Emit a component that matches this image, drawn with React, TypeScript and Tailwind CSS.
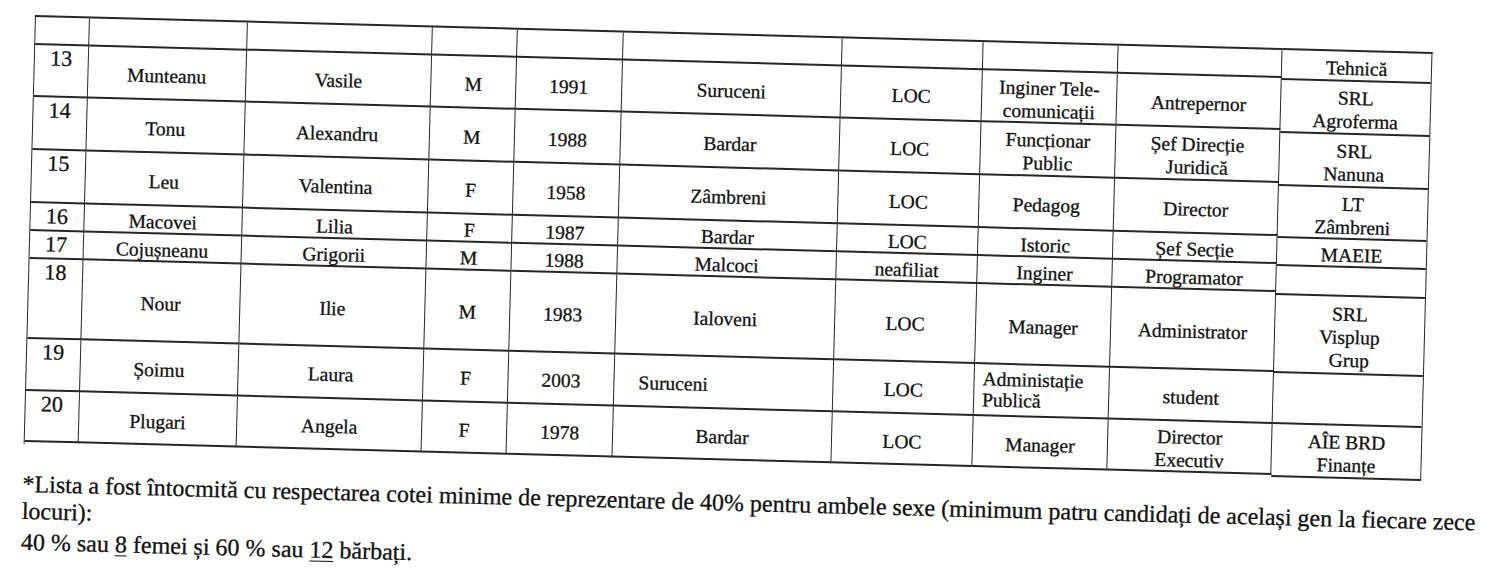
import React from "react";

type V = string | string[];

const mainRows: V[][] = [
  ["", "", "", "", "", "", "", "", ""],
  ["13", "Munteanu", "Vasile", "M", "1991", "Suruceni", "LOC", ["Inginer Tele-", "comunicații"], "Antrepernor"],
  ["14", "Tonu", "Alexandru", "M", "1988", "Bardar", "LOC", ["Funcționar", "Public"], ["Șef Direcție", "Juridică"]],
  ["15", "Leu", "Valentina", "F", "1958", "Zâmbreni", "LOC", "Pedagog", "Director"],
  ["16", "Macovei", "Lilia", "F", "1987", "Bardar", "LOC", "Istoric", "Șef Secție"],
  ["17", "Cojușneanu", "Grigorii", "M", "1988", "Malcoci", "neafiliat", "Inginer", "Programator"],
  ["18", "Nour", "Ilie", "M", "1983", "Ialoveni", "LOC", "Manager", "Administrator"],
  ["19", "Șoimu", "Laura", "F", "2003", "Suruceni", "LOC", ["Administație", "Publică"], "student"],
  ["20", "Plugari", "Angela", "F", "1978", "Bardar", "LOC", "Manager", ["Director", "Executiv"]],
];

const company: V[] = [
  "Tehnică",
  ["SRL", "Agroferma"],
  ["SRL", "Nanuna"],
  ["LT", "Zâmbreni"],
  "MAEIE",
  "",
  ["SRL", "Visplup", "Grup"],
  "",
  ["AÎE BRD", "Finanțe"],
];

const companyH = [
  "h-[30px]",
  "h-[53px]",
  "h-[53px]",
  "h-[52px]",
  "h-[28px]",
  "h-[29px]",
  "h-[78px]",
  "h-[51px]",
  "h-[53px]",
];

const border = "border-r-[1.5px] border-b-2 border-[#262626]";
const baseCell =
  "flex items-center justify-center text-center pt-[5px] text-[19.5px] leading-[23px] " + border;
const idxCell =
  "flex items-start justify-center pt-[1px] text-[22px] leading-[24px] " + border;
const leftLocCell =
  "flex items-center justify-start pl-[24px] pt-[5px] text-[19.5px] leading-[23px] " + border;
const leftProfCell =
  "flex items-center justify-start text-left pl-[8px] text-[19.5px] leading-[21px] " + border;

function Lines({ v }: { v: V }) {
  const arr = Array.isArray(v) ? v : [v];
  return (
    <div className="flex flex-col">
      {arr.map((l, i) => (
        <div key={i} className="whitespace-nowrap">
          {l}
        </div>
      ))}
    </div>
  );
}

export default function App() {
  return (
    <div className="w-[1500px] h-[576px] overflow-hidden bg-white text-[#111111] [-webkit-text-stroke:0.3px_#111111] font-['Liberation_Serif','Times_New_Roman',serif]">
      <div className="pt-[15px] pl-[35px]">
        <div className="origin-top-left rotate-[1.52deg] w-[1400px]">
          <div className="flex">
            <div className="grid grid-cols-[53.5px_158.5px_185px_85px_106px_219px_141px_135px_164px] grid-rows-[28px_52px_53px_53px_28px_28px_80px_52px_51px] border-t-2 border-l-[1.5px] border-[#262626]">
              {mainRows.map((row, r) =>
                row.map((v, c) => {
                  let cls = baseCell;
                  if (c === 0) cls = idxCell;
                  if (r === 7 && c === 5) cls = leftLocCell;
                  if (r === 7 && c === 7) cls = leftProfCell;
                  return (
                    <div key={r + "-" + c} className={cls}>
                      <Lines v={v} />
                    </div>
                  );
                })
              )}
            </div>
            <div className="flex flex-col w-[150px] border-t-2 border-r-[1.5px] border-[#262626]">
              {company.map((v, i) => (
                <div
                  key={i}
                  className={
                    companyH[i] +
                    " flex items-center justify-center text-center pt-[5px] text-[19.5px] leading-[23px] border-b-2 border-[#262626]"
                  }
                >
                  <Lines v={v} />
                </div>
              ))}
            </div>
          </div>
          <div className="mt-[27px] text-[24px] leading-[27px]">
            <div className="whitespace-nowrap">
              *Lista a fost întocmită cu respectarea cotei minime de reprezentare de 40% pentru ambele sexe (minimum patru candidați de același gen la fiecare zece
            </div>
            <div>locuri):</div>
            <div className="mt-[4px] whitespace-nowrap">
              40 % sau <span className="underline decoration-1 underline-offset-[3px]">8</span> femei și 60 % sau{" "}
              <span className="underline decoration-1 underline-offset-[3px]">12</span> bărbați.
            </div>
          </div>
        </div>
      </div>
    </div>
  );
}
